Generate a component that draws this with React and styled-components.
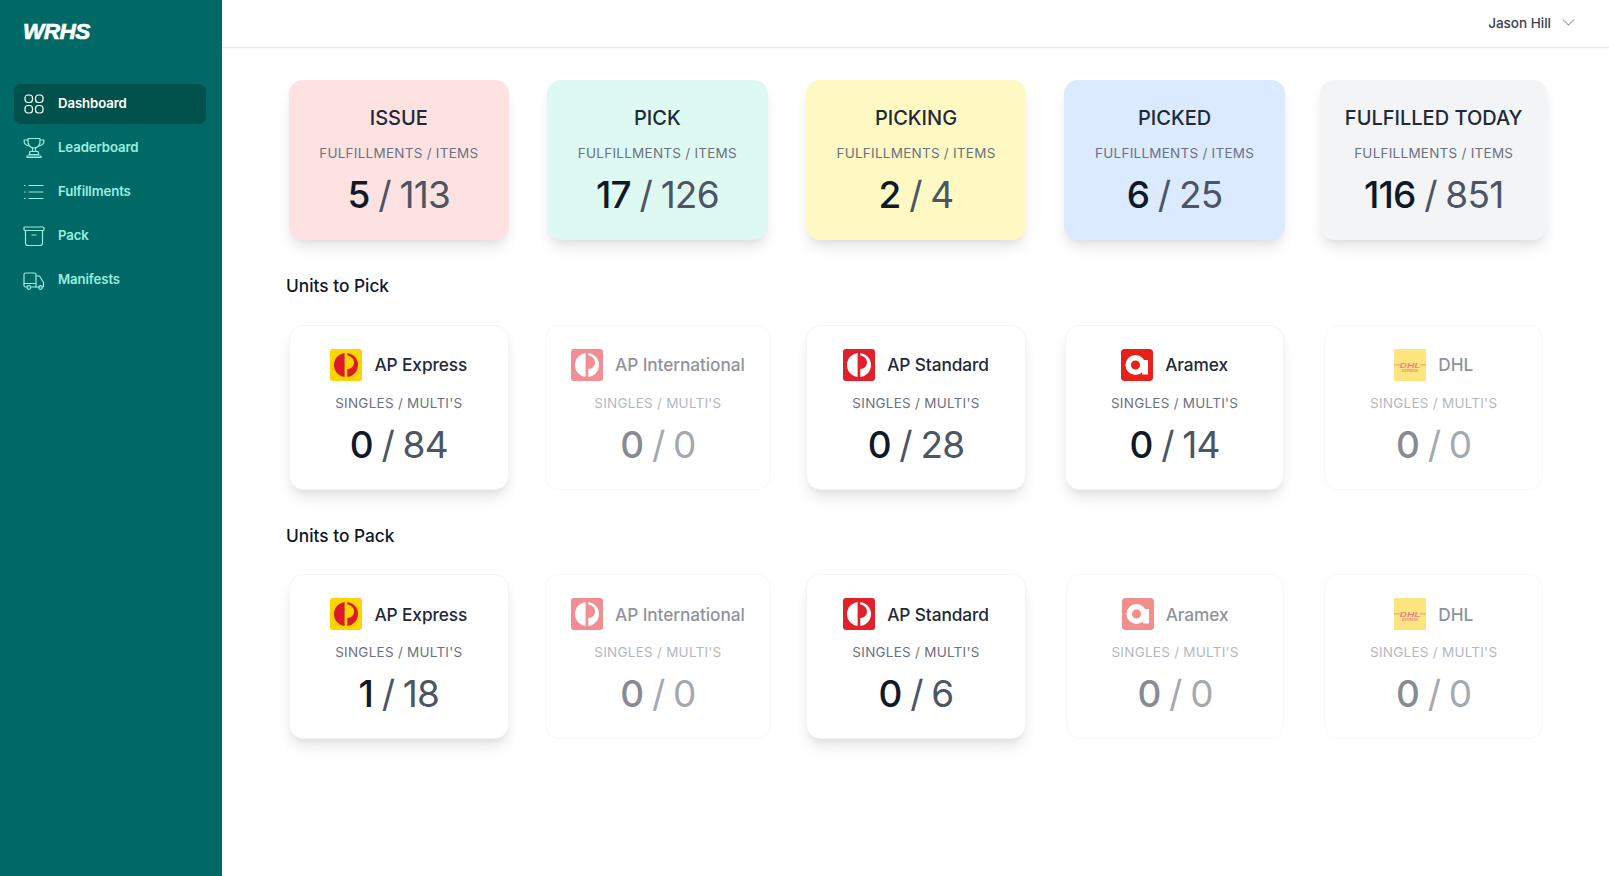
import React from "react";
import styled, { createGlobalStyle } from "styled-components";
import { ChevronDown } from "lucide-react";

const GlobalStyle = createGlobalStyle`
  html, body { margin: 0; padding: 0; height: 100%; background: #fff; }
  body { font-family: Inter, "Liberation Sans", sans-serif; color: #111827; }
  #root { height: 100%; }
`;

const Shell = styled.div`
  display: flex;
  min-height: 876px;
`;

const Sidebar = styled.aside`
  width: 222px;
  flex: none;
  background: #006965;
  padding: 0 16px 0 14px;
  box-sizing: border-box;
`;

const Logo = styled.div`
  height: 62px;
  padding: 19px 0 0 9px;
  box-sizing: border-box;
  font-family: "Liberation Sans", sans-serif;
  font-style: italic;
  font-weight: 700;
  font-size: 22.5px;
  line-height: 26px;
  letter-spacing: -0.5px;
  color: #fff;
  -webkit-text-stroke: 0.7px #fff;
`;

const Nav = styled.nav`
  margin-top: 22px;
  display: flex;
  flex-direction: column;
  gap: 4px;
`;

const NavItem = styled.a`
  display: flex;
  align-items: center;
  gap: 13px;
  height: 40px;
  padding-left: 9px;
  border-radius: 7px;
  font-size: 13.2px;
  font-weight: 600;
  letter-spacing: -0.1px;
  color: ${(p) => (p.$active ? "#fff" : "#99ede0")};
  background: ${(p) => (p.$active ? "#00504c" : "transparent")};
`;

const NavLabel = styled.span`
  margin-bottom: 2px;
`;

const NavIcon = styled.svg`
  width: 22px;
  height: 22px;
  flex: none;
  fill: none;
  stroke: currentColor;
  stroke-width: 1.2;
  stroke-linecap: round;
  stroke-linejoin: round;
`;

const Main = styled.div`
  flex: 1;
  min-width: 0;
`;

const Header = styled.header`
  height: 48px;
  box-sizing: border-box;
  border-bottom: 1px solid #e5e7eb;
  box-shadow: 0 1px 2px rgba(0, 0, 0, 0.03);
  display: flex;
  align-items: center;
  justify-content: flex-end;
  padding: 0 30px 2px 0;
  gap: 7px;
`;

const UserName = styled.span`
  font-size: 13.5px;
  font-weight: 500;
  color: #374151;
`;

const Content = styled.main`
  padding: 32px 62px 0 64px;
`;

const Row = styled.section`
  display: grid;
  grid-template-columns: repeat(5, minmax(0, 1fr));
  column-gap: 32px;
`;

const SectionTitle = styled.h2`
  margin: 34px 0 26.5px;
  font-size: 17.3px;
  line-height: 24px;
  font-weight: 500;
  color: #111827;
`;

const StatCard = styled.div`
  height: 160px;
  margin: 0 ${(p) => (p.$full ? "0" : "3.5px 0 2.5px")};
  border-radius: 14px;
  background: ${(p) => p.$bg};
  box-shadow: 0 10px 15px -3px rgba(0, 0, 0, 0.1), 0 4px 6px -2px rgba(0, 0, 0, 0.05);
  display: flex;
  flex-direction: column;
  align-items: center;
  padding-top: 25px;
  box-sizing: border-box;
`;

const StatTitle = styled.div`
  font-size: 20px;
  line-height: 26px;
  font-weight: 500;
  color: #1f2937;
`;

const Caption = styled.div`
  margin-top: ${(p) => p.$top}px;
  font-size: 13.5px;
  line-height: 20px;
  letter-spacing: 0.25px;
  color: #6b7280;
  white-space: nowrap;
`;

const Figures = styled.div`
  margin-top: ${(p) => p.$top}px;
  font-size: 37px;
  line-height: 44px;
  font-weight: 400;
  letter-spacing: -0.8px;
  word-spacing: -1px;
  color: #4b5563;
  white-space: nowrap;
`;

const Strong = styled.strong`
  font-weight: 550;
  color: #111827;
`;

const UnitCard = styled.div`
  height: 165px;
  margin: 0 ${(p) => (p.$wide ? "0" : p.$faded ? "4px" : "4px 0 3px")};
  border-radius: 14px;
  border: 1px solid #f3f4f6;
  background: #fff;
  box-sizing: border-box;
  box-shadow: ${(p) =>
    p.$faded
      ? "none"
      : "0 10px 15px -3px rgba(0, 0, 0, 0.1), 0 4px 6px -2px rgba(0, 0, 0, 0.05)"};
  opacity: ${(p) => (p.$faded ? 0.5 : 1)};
  display: flex;
  flex-direction: column;
  align-items: center;
  padding-top: 23px;
`;

const Carrier = styled.div`
  display: flex;
  align-items: center;
  gap: 12px;
  height: 32px;
`;

const CarrierName = styled.span`
  font-size: 17.3px;
  font-weight: 500;
  color: #1f2937;
  letter-spacing: -0.1px;
`;

const LogoTile = styled.svg`
  width: 32px;
  height: 32px;
  display: block;
  border-radius: ${(p) => (p.$square ? 0 : 3)}px;
`;

const DhlMark = styled.text`
  font-family: "Liberation Sans", sans-serif;
  font-style: italic;
  font-weight: 700;
`;

const DashboardIcon = () => (
  <NavIcon viewBox="0 0 22 22">
    <rect x="2" y="2" width="7.5" height="7.5" rx="3" />
    <rect x="12.5" y="2" width="7.5" height="7.5" rx="3" />
    <rect x="2" y="12.5" width="7.5" height="7.5" rx="3" />
    <rect x="12.5" y="12.5" width="7.5" height="7.5" rx="3" />
  </NavIcon>
);

const TrophyIcon = () => (
  <NavIcon viewBox="0 0 22 22">
    <path d="M5 1.5h12v3.5a6 6 0 0 1-12 0z" />
    <path d="M5 3H1c0 3.5 1.6 5.5 5 6M17 3h4c0 3.5-1.6 5.500-5 6" />
    <path d="M9.500 11v3.500h3V11" />
    <path d="M7 14.500h8l.8 3H6.200z" />
    <path d="M4 20.500h14M4 20.500v-1.500h14v1.500" />
  </NavIcon>
);

const ListIcon = () => (
  <NavIcon viewBox="0 0 22 22">
    <path d="M6 4.500h14M6 11h14M6 17.500h14" />
    <path d="M1.500 4.500h.6M1.500 11h.6M1.500 17.500h.6" />
  </NavIcon>
);

const ArchiveIcon = () => (
  <NavIcon viewBox="0 0 22 22">
    <rect x="1" y="2" width="20" height="3.500" rx="1" />
    <path d="M2.500 5.500V18a2.500 2.500 0 0 0 2.500 2.500h12a2.500 2.500 0 0 0 2.500-2.500V5.500" />
    <path d="M9 10h4" />
  </NavIcon>
);

const TruckIcon = () => (
  <NavIcon viewBox="0 0 22 22">
    <path d="M4 18H2.500A1.500 1.500 0 0 1 1 16.500V5.500A1.500 1.500 0 0 1 2.500 4h9A1.500 1.500 0 0 1 13 5.500V18" />
    <path d="M8 18h9" />
    <path d="M13 7h3.500l4 6.500V17a1 1 0 0 1-1 1H19" />
    <path d="M1 14.500h12" />
    <circle cx="5.800" cy="18.500" r="1.800" />
    <circle cx="17.500" cy="18.500" r="1.800" />
  </NavIcon>
);

// Australia Post style "P" mark, shared by the three AP services
const ApLogo = ({ bg, fg }) => (
  <LogoTile viewBox="0 0 32 32">
    <rect width="32" height="32" fill={bg} />
    <circle cx="16" cy="16" r="12" fill={fg} />
    <path d="M14.600 2V30H17.300V20C21.500 20 24 17 24 13.500C24 9.500 21 7 17.300 6.500V2Z" fill={bg} />
  </LogoTile>
);

const AramexLogo = () => (
  <LogoTile viewBox="0 0 32 32">
    <rect width="32" height="32" rx="3" fill="#e8201a" />
    <circle cx="14.500" cy="16" r="7.300" fill="none" stroke="#fff" strokeWidth="5.500" />
    <rect x="21" y="11" width="6" height="14.500" fill="#fff" />
  </LogoTile>
);

const DhlLogo = () => (
  <LogoTile $square viewBox="0 0 32 32">
    <rect width="32" height="32" fill="#ffcc00" />
    <rect y="15.500" width="6" height="0.800" fill="#d40511" />
    <rect x="26" y="15.500" width="6" height="0.800" fill="#d40511" />
    <DhlMark
      x="5.500"
      y="18.500"
      fontSize="7.500"
      fill="#d40511"
      textLength="21"
      lengthAdjust="spacingAndGlyphs"
    >
      DHL
    </DhlMark>
    <DhlMark
      x="8"
      y="23"
      fontSize="3.200"
      fill="#d40511"
      textLength="16"
      lengthAdjust="spacingAndGlyphs"
    >
      EXPRESS
    </DhlMark>
  </LogoTile>
);

const navItems = [
  { label: "Dashboard", icon: <DashboardIcon />, active: true },
  { label: "Leaderboard", icon: <TrophyIcon /> },
  { label: "Fulfillments", icon: <ListIcon /> },
  { label: "Pack", icon: <ArchiveIcon /> },
  { label: "Manifests", icon: <TruckIcon /> },
];

const stats = [
  { title: "ISSUE", bg: "#fee2e2", a: 5, b: 113 },
  { title: "PICK", bg: "#def9f1", a: 17, b: 126 },
  { title: "PICKING", bg: "#fef9c3", a: 2, b: 4 },
  { title: "PICKED", bg: "#dbeafe", a: 6, b: 25 },
  { title: "FULFILLED TODAY", bg: "#f3f4f6", a: 116, b: 851, full: true },
];

const carrierLogos = {
  "AP Express": <ApLogo bg="#ffd400" fg="#dc1928" />,
  "AP International": <ApLogo bg="#e2202c" fg="#fff" />,
  "AP Standard": <ApLogo bg="#e2202c" fg="#fff" />,
  Aramex: <AramexLogo />,
  DHL: <DhlLogo />,
};

const toPick = [
  { name: "AP Express", a: 0, b: 84 },
  { name: "AP International", a: 0, b: 0 },
  { name: "AP Standard", a: 0, b: 28 },
  { name: "Aramex", a: 0, b: 14 },
  { name: "DHL", a: 0, b: 0 },
];

const toPack = [
  { name: "AP Express", a: 1, b: 18 },
  { name: "AP International", a: 0, b: 0 },
  { name: "AP Standard", a: 0, b: 6 },
  { name: "Aramex", a: 0, b: 0 },
  { name: "DHL", a: 0, b: 0 },
];

const UnitRow = ({ items }) => (
  <Row>
    {items.map((item) => (
      <UnitCard
        key={item.name}
        $faded={item.a + item.b === 0}
        $wide={item.name === "AP International"}
      >
        <Carrier>
          {carrierLogos[item.name]}
          <CarrierName>{item.name}</CarrierName>
        </Carrier>
        <Caption $top={12}>SINGLES / MULTI'S</Caption>
        <Figures $top={10}>
          <Strong>{item.a}</Strong> / {item.b}
        </Figures>
      </UnitCard>
    ))}
  </Row>
);

export default function App() {
  return (
    <Shell>
      <GlobalStyle />
      <Sidebar>
        <Logo>WRHS</Logo>
        <Nav>
          {navItems.map((item) => (
            <NavItem key={item.label} $active={item.active}>
              {item.icon}
              <NavLabel>{item.label}</NavLabel>
            </NavItem>
          ))}
        </Nav>
      </Sidebar>
      <Main>
        <Header>
          <UserName>Jason Hill</UserName>
          <ChevronDown size={21} color="#9ca3af" strokeWidth={1.2} />
        </Header>
        <Content>
          <Row>
            {stats.map((s) => (
              <StatCard key={s.title} $bg={s.bg} $full={s.full}>
                <StatTitle>{s.title}</StatTitle>
                <Caption $top={12}>FULFILLMENTS / ITEMS</Caption>
                <Figures $top={10}>
                  <Strong>{s.a}</Strong> / {s.b}
                </Figures>
              </StatCard>
            ))}
          </Row>
          <SectionTitle>Units to Pick</SectionTitle>
          <UnitRow items={toPick} />
          <SectionTitle>Units to Pack</SectionTitle>
          <UnitRow items={toPack} />
        </Content>
      </Main>
    </Shell>
  );
}
